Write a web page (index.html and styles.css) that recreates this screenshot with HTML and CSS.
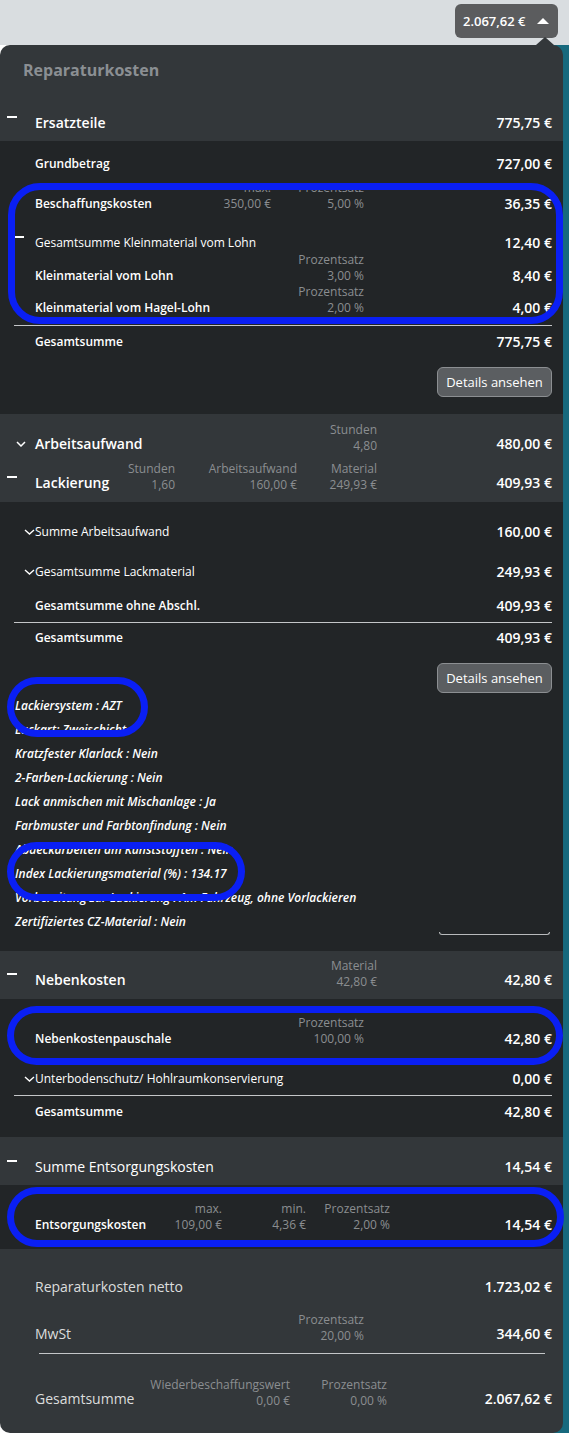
FILE: index.html
```html
<!DOCTYPE html>
<html lang="de">
<head>
<meta charset="utf-8">
<title>Reparaturkosten</title>
<link rel="stylesheet" href="styles.css">
</head>
<body>
<div class="topbar">
  <button class="total-btn" type="button"><span>2.067,62 €</span><svg class="caret-up" width="12" height="6" viewBox="0 0 12 6"><path d="M0 6 L6 0 L12 6 Z" fill="#fff"/></svg></button>
</div>
<div class="stage">
  <div class="pointer"></div>
  <div class="panel">
    <h1 class="title">Reparaturkosten</h1>

    <section class="group">
      <div class="row ghead g-first cols-a">
        <span class="tog tog-h"><i class="dash"></i></span>
        <span class="name">Ersatzteile</span>
        <span class="amt">775,75 €</span>
      </div>
      <div class="gbody b-ersatz">
        <div class="row cols-a r-plain">
          <span class="tog"></span><span class="name">Grundbetrag</span><span class="amt">727,00 €</span>
        </div>
        <div class="row cols-b">
          <span class="tog"></span><span class="name">Beschaffungskosten</span>
          <span class="meta"><span>max.</span><span>350,00 €</span></span>
          <span class="meta"><span>Prozentsatz</span><span>5,00 %</span></span>
          <span class="amt">36,35 €</span>
        </div>
        <div class="row cols-a r-sum">
          <span class="tog"><i class="dash dash-sub"></i></span><span class="name light">Gesamtsumme Kleinmaterial vom Lohn</span><span class="amt">12,40 €</span>
        </div>
        <div class="row cols-c">
          <span class="tog"></span><span class="name">Kleinmaterial vom Lohn</span>
          <span class="meta"><span>Prozentsatz</span><span>3,00 %</span></span>
          <span class="amt">8,40 €</span>
        </div>
        <div class="row cols-c">
          <span class="tog"></span><span class="name">Kleinmaterial vom Hagel-Lohn</span>
          <span class="meta"><span>Prozentsatz</span><span>2,00 %</span></span>
          <span class="amt">4,00 €</span>
        </div>
        <div class="divider gap9"></div>
        <div class="row cols-a r-total">
          <span class="tog"></span><span class="name">Gesamtsumme</span><span class="amt">775,75 €</span>
        </div>
        <button class="details" type="button">Details ansehen</button>
      </div>
    </section>

    <section class="group">
      <div class="row ghead g-collapsed cols-d">
        <span class="tog tog-h"><svg class="chev chev-h" width="10" height="6" viewBox="0 0 10 6"><path d="M1 1 L5 5 L9 1" fill="none" stroke="#fff" stroke-width="1.5"/></svg></span>
        <span class="name">Arbeitsaufwand</span>
        <span class="meta"><span>Stunden</span><span>4,80</span></span>
        <span class="amt">480,00 €</span>
      </div>
    </section>

    <section class="group">
      <div class="row ghead cols-e">
        <span class="tog tog-h"><i class="dash"></i></span>
        <span class="name big">Lackierung</span>
        <span class="meta"><span>Stunden</span><span>1,60</span></span>
        <span class="meta"><span>Arbeitsaufwand</span><span>160,00 €</span></span>
        <span class="meta"><span>Material</span><span>249,93 €</span></span>
        <span class="amt">409,93 €</span>
      </div>
      <div class="gbody b-lack">
        <div class="row cols-a r-fold">
          <span class="tog"><svg class="chev chev-s" width="11" height="6" viewBox="0 0 11 6"><path d="M1 1 L5.5 5 L10 1" fill="none" stroke="#fff" stroke-width="1.4"/></svg></span><span class="name light">Summe Arbeitsaufwand</span><span class="amt">160,00 €</span>
        </div>
        <div class="row cols-a r-fold">
          <span class="tog"><svg class="chev chev-s" width="11" height="6" viewBox="0 0 11 6"><path d="M1 1 L5.5 5 L10 1" fill="none" stroke="#fff" stroke-width="1.4"/></svg></span><span class="name light">Gesamtsumme Lackmaterial</span><span class="amt">249,93 €</span>
        </div>
        <div class="row cols-a r-pre">
          <span class="tog"></span><span class="name">Gesamtsumme ohne Abschl.</span><span class="amt">409,93 €</span>
        </div>
        <div class="divider"></div>
        <div class="row cols-a r-total2">
          <span class="tog"></span><span class="name">Gesamtsumme</span><span class="amt">409,93 €</span>
        </div>
        <button class="details" type="button">Details ansehen</button>
        <ul class="attrs">
          <li>Lackiersystem : AZT</li>
          <li>Lackart: Zweischicht</li>
          <li>Kratzfester Klarlack : Nein</li>
          <li>2-Farben-Lackierung : Nein</li>
          <li>Lack anmischen mit Mischanlage : Ja</li>
          <li>Farbmuster und Farbtonfindung : Nein</li>
          <li>Abdeckarbeiten am Kunststoffteil : Nein</li>
          <li>Index Lackierungsmaterial (%) : 134.17</li>
          <li>Vorbereitung zur Lackierung : Am Fahrzeug, ohne Vorlackieren</li>
          <li>Zertifiziertes CZ-Material : Nein</li>
        </ul>
        <div class="ghost-edge"></div>
      </div>
    </section>

    <section class="group">
      <div class="row ghead cols-d">
        <span class="tog tog-h"><i class="dash"></i></span>
        <span class="name">Nebenkosten</span>
        <span class="meta"><span>Material</span><span>42,80 €</span></span>
        <span class="amt">42,80 €</span>
      </div>
      <div class="gbody b-neben">
        <div class="row cols-c">
          <span class="tog"></span><span class="name">Nebenkostenpauschale</span>
          <span class="meta"><span>Prozentsatz</span><span>100,00 %</span></span>
          <span class="amt">42,80 €</span>
        </div>
        <div class="row cols-a r-under">
          <span class="tog"><svg class="chev chev-s" width="11" height="6" viewBox="0 0 11 6"><path d="M1 1 L5.5 5 L10 1" fill="none" stroke="#fff" stroke-width="1.4"/></svg></span><span class="name light">Unterbodenschutz/ Hohlraumkonservierung</span><span class="amt">0,00 €</span>
        </div>
        <div class="divider"></div>
        <div class="row cols-a r-total">
          <span class="tog"></span><span class="name">Gesamtsumme</span><span class="amt">42,80 €</span>
        </div>
      </div>
    </section>

    <section class="group">
      <div class="row ghead g-plain cols-a">
        <span class="tog tog-h"><i class="dash"></i></span>
        <span class="name regular">Summe Entsorgungskosten</span>
        <span class="amt">14,54 €</span>
      </div>
      <div class="gbody b-entsorg">
        <div class="row cols-f">
          <span class="tog"></span><span class="name">Entsorgungskosten</span>
          <span class="meta"><span>max.</span><span>109,00 €</span></span>
          <span class="meta"><span>min.</span><span>4,36 €</span></span>
          <span class="meta"><span>Prozentsatz</span><span>2,00 %</span></span>
          <span class="amt">14,54 €</span>
        </div>
      </div>
    </section>

    <section class="summary">
      <div class="row cols-a">
        <span class="tog"></span><span class="name">Reparaturkosten netto</span><span class="amt">1.723,02 €</span>
      </div>
      <div class="row cols-c s-mwst">
        <span class="tog"></span><span class="name">MwSt</span>
        <span class="meta"><span>Prozentsatz</span><span>20,00 %</span></span>
        <span class="amt">344,60 €</span>
      </div>
      <div class="divider s-div"></div>
      <div class="row cols-g s-total">
        <span class="tog"></span><span class="name">Gesamtsumme</span>
        <span class="meta"><span>Wiederbeschaffungswert</span><span>0,00 €</span></span>
        <span class="meta"><span>Prozentsatz</span><span>0,00 %</span></span>
        <span class="amt">2.067,62 €</span>
      </div>
    </section>
  </div>
</div>

<div class="ring ring-1"></div>
<div class="ring ring-2"></div>
<div class="ring ring-3"></div>
<div class="ring ring-4"></div>
<div class="ring ring-5"></div>
</body>
</html>
```

FILE: styles.css
```css
* { box-sizing: border-box; }
html, body { margin: 0; padding: 0; }
body {
  position: relative;
  width: 569px;
  min-height: 1433px;
  background: #ffffff;
  color: #ffffff;
  font-family: "Open Sans", "Noto Sans", sans-serif;
}

/* top bar with total */
.topbar {
  height: 45px;
  background: #d9dde0;
  display: flex;
  justify-content: flex-end;
  align-items: flex-start;
  padding: 4px 11px 0 0;
}
.total-btn {
  height: 34px;
  width: 103px;
  border: 0;
  border-radius: 6px;
  background: #5b5c5e;
  color: #fff;
  font-family: "Open Sans", sans-serif;
  font-weight: 600;
  font-size: 13px;
  line-height: 1;
  display: flex;
  align-items: center;
  gap: 11px;
  padding: 0 0 0 8px;
}
.caret-up { display: block; }

.stage {
  position: relative;
  background: linear-gradient(90deg, #ffffff 280px, #17697d 280px);
}
.pointer {
  position: absolute;
  left: 536px;
  top: -8px;
  width: 0;
  height: 0;
  border-left: 9px solid transparent;
  border-right: 9px solid transparent;
  border-bottom: 8px solid #33373a;
}
.panel {
  width: 563px;
  background: #33373a;
  border-radius: 10px;
  overflow: hidden;
}
.title {
  margin: 0;
  padding: 14px 23px 23px;
  font-size: 16px;
  line-height: 22px;
  font-weight: 700;
  color: #8b8f93;
}

/* generic row */
.row {
  display: grid;
  align-items: end;
  padding-right: 11px;
}
.cols-a { grid-template-columns: 35px 1fr auto; }
.cols-b { grid-template-columns: 35px 1fr 80px 93px 188px; }
.cols-c { grid-template-columns: 35px 1fr 93px 188px; }
.cols-d { grid-template-columns: 35px 1fr 80px 175px; }
.cols-e { grid-template-columns: 35px 1fr 60px 122px 80px 175px; }
.cols-f { grid-template-columns: 35px 1fr 60px 84px 84px 162px; }
.cols-g { grid-template-columns: 35px 1fr 150px 97px 165px; }

.name {
  font-size: 12px;
  line-height: 16px;
  font-weight: 600;
  white-space: nowrap;
}
.name.light { font-weight: 400; }
.amt {
  font-size: 14px;
  line-height: 16px;
  font-weight: 600;
  text-align: right;
  white-space: nowrap;
}
.meta {
  display: flex;
  flex-direction: column;
  text-align: right;
  font-size: 12px;
  line-height: 16px;
  font-weight: 400;
  color: #8b8e91;
  white-space: nowrap;
}

/* toggles */
.tog {
  align-self: end;
  height: 16px;
}
.tog-h { height: 20px; }
.dash {
  display: block;
  width: 10px;
  height: 2px;
  margin: 3px 0 0 7px;
  background: #fff;
}
.dash-sub {
  width: 9px;
  margin: 1px 0 0 15px;
}
.chev { display: block; }
.chev-h { margin: 7px 0 0 16px; }
.chev-s { margin: 5px 0 0 24px; }

/* group headers */
.ghead { padding: 7px 11px 9px 0; }
.ghead .name { font-size: 14px; line-height: 20px; }
.ghead .name.regular { font-weight: 400; }
.ghead .amt { line-height: 20px; }
.g-first { padding: 9px 11px 8px 0; }
.g-collapsed { padding: 8px 11px 0 0; }
.g-plain { padding: 20px 11px 8px 0; }

/* group bodies */
.gbody { background: #222527; }
.b-ersatz { padding: 7px 0 17px; }
.b-lack { padding: 10px 0 16px; }
.b-neben { padding: 16px 0 17px; }
.b-entsorg { padding: 16px 0; }

.r-plain { padding-top: 8px; padding-bottom: 8px; }
.r-sum { padding-top: 23px; padding-bottom: 1px; }
.r-total { padding-top: 8px; }
.r-total2 { padding-top: 7px; }
.r-fold { padding-top: 12px; padding-bottom: 12px; }
.r-pre { padding-top: 6px; padding-bottom: 8px; }
.r-under { padding-top: 24px; padding-bottom: 8px; }

.divider {
  height: 1px;
  background: #c4c6c8;
  margin: 0 11px 0 14px;
}
.divider.gap9 { margin-top: 9px; }

.details {
  display: block;
  width: 115px;
  height: 30px;
  margin: 17px 11px 0 auto;
  padding: 0;
  background: #5b5e61;
  border: 1px solid #8c8f92;
  border-radius: 6px;
  color: #fff;
  font-family: "Open Sans", sans-serif;
  font-size: 13px;
  line-height: 28px;
  text-align: center;
}

.attrs {
  list-style: none;
  margin: 1px 0 0;
  padding: 0 0 0 15px;
  font-size: 12px;
  line-height: 24px;
  font-style: italic;
  font-weight: 600;
  white-space: nowrap;
}
.ghost-edge {
  width: 111px;
  height: 3px;
  margin: -2px 13px 0 auto;
  border: 1px solid #b8babc;
  border-top: 0;
  border-radius: 0 0 8px 8px;
}

/* summary */
.summary { padding: 28px 0 24px; }
.summary .name {
  font-size: 14px;
  line-height: 20px;
  font-weight: 400;
  color: #dcdddd;
}
.summary .amt { line-height: 20px; }
.s-mwst { margin-top: 15px; }
.s-div { margin: 9px 18px 0 39px; }
.s-total { margin-top: 23px; }

/* annotation rings */
.ring {
  position: absolute;
  border: 7px solid #0a1ff4;
  border-radius: 30px;
  pointer-events: none;
}
.ring-1 { left: 8px; top: 183px; width: 555px; height: 141px; border-radius: 32px; }
.ring-2 { left: 7px; top: 677px; width: 141px; height: 60px; }
.ring-3 { left: 7px; top: 842px; width: 238px; height: 59px; }
.ring-4 { left: 7px; top: 1006px; width: 556px; height: 59px; }
.ring-5 { left: 7px; top: 1187px; width: 557px; height: 60px; }
```
